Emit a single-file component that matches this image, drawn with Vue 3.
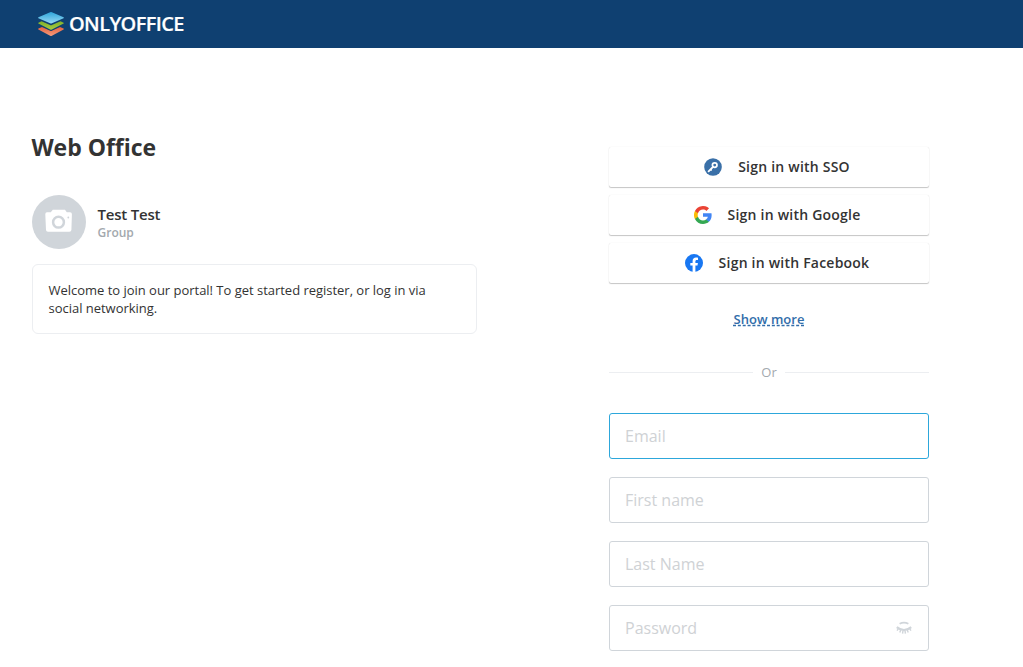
<script setup>
const providers = [
  { id: 'sso', label: 'Sign in with SSO' },
  { id: 'google', label: 'Sign in with Google' },
  { id: 'facebook', label: 'Sign in with Facebook' },
]
const fields = [
  { id: 'email', label: 'Email', type: 'text' },
  { id: 'first', label: 'First name', type: 'text' },
  { id: 'last', label: 'Last Name', type: 'text' },
  { id: 'password', label: 'Password', type: 'password' },
]
</script>

<template>
  <div class="page">
    <header class="bar">
      <svg class="logo" width="150" height="28" viewBox="0 0 150 28">
        <defs>
          <linearGradient id="lgBlue" x1="0" y1="0" x2="0" y2="1"><stop offset="0" stop-color="#2fa5da" /><stop offset="1" stop-color="#98daf4" /></linearGradient>
          <linearGradient id="lgGreen" x1="0" y1="0" x2="0" y2="1"><stop offset="0" stop-color="#7fb02c" /><stop offset="1" stop-color="#a8cc3e" /></linearGradient>
          <linearGradient id="lgRed" x1="0" y1="0" x2="0" y2="1"><stop offset="0" stop-color="#e5623f" /><stop offset="1" stop-color="#f49b7c" /></linearGradient>
        </defs>
        <path d="M1.400 18.600 5 17l8.100 3.700q.9.400 1.800 0L23 17l3.600 1.600q.6.400 0 .9L14.900 25.700q-.9.400-1.800 0L1.400 19.500q-.6-.5 0-.9z" fill="url(#lgRed)" />
        <path d="M1.400 12.700 4.500 11.200l8.600 3.900q.9.400 1.800 0l8.600-3.900 3.100 1.500q.6.400 0 .9L14.900 19.600q-.9.400-1.800 0L1.400 13.600q-.6-.5 0-.9z" fill="url(#lgGreen)" />
        <path d="M1.400 7.300 13.100 2.300q.9-.4 1.800 0L26.600 7.300q.6.400 0 .9L14.900 13.300q-.9.400-1.800 0L1.400 8.200q-.6-.5 0-.9z" fill="url(#lgBlue)" />
        <text x="32" y="21.300" textLength="115.500" lengthAdjust="spacing">ONLYOFFICE</text>
      </svg>
    </header>

    <main class="content">
      <section class="intro">
        <h1>Web Office</h1>
        <div class="user">
          <svg class="avatar" width="54" height="54" viewBox="0 0 54 54">
            <circle cx="27" cy="27" r="27" fill="#d0d5da" />
            <path d="M15 17.200H18.800L20.800 14.800H33L34.800 17.200H38q2 0 1.900 2L39.400 35q-.1 1.800-2 1.800H16q-1.900 0-2-1.800L13.300 19.200q0-2 1.700-2z" fill="#fff" />
            <circle cx="26.500" cy="27.200" r="5.400" fill="#fff" stroke="#d0d5da" stroke-width="2.500" />
            <circle cx="36.300" cy="22.500" r=".9" fill="#d0d5da" />
          </svg>
          <div class="who">
            <div class="name">Test Test</div>
            <div class="group">Group</div>
          </div>
        </div>
        <p class="welcome">Welcome to join our portal! To get started register, or log in via social networking.</p>
      </section>

      <section class="signup">
        <div class="providers">
          <button v-for="p in providers" :key="p.id" class="provider" type="button">
            <svg v-if="p.id === 'sso'" width="18" height="18" viewBox="0 0 18 18">
              <circle cx="9" cy="9" r="8.800" fill="#3a70a8" />
              <circle cx="10.700" cy="7.100" r="2.300" fill="none" stroke="#fff" stroke-width="1.700" />
              <path d="M9 8.900 4.600 13.300M6.600 11.400l.5.500" fill="none" stroke="#fff" stroke-width="1.900" stroke-linecap="round" />
            </svg>
            <svg v-else-if="p.id === 'google'" width="18" height="18" viewBox="0 0 18 18">
              <path fill="#4285f4" d="M17.640 9.200c0-.637-.057-1.251-.164-1.840H9v3.481h4.844a4.140 4.140 0 0 1-1.796 2.716v2.259h2.908c1.702-1.567 2.684-3.875 2.684-6.616z" />
              <path fill="#34a853" d="M9 18c2.430 0 4.467-.806 5.956-2.184l-2.908-2.259c-.806.540-1.837.860-3.048.860-2.344 0-4.328-1.584-5.036-3.711H.957v2.332A9 9 0 0 0 9 18z" />
              <path fill="#fbbc05" d="M3.964 10.706a5.410 5.410 0 0 1 0-3.412V4.962H.957a9 9 0 0 0 0 8.076z" />
              <path fill="#ea4335" d="M9 3.580c1.321 0 2.508.454 3.440 1.345l2.582-2.580A9 9 0 0 0 .957 4.962l3.007 2.332C4.672 5.163 6.656 3.580 9 3.580z" />
            </svg>
            <svg v-else width="18" height="18" viewBox="0 0 18 18">
              <circle cx="9" cy="9" r="9" fill="#1877f2" />
              <path d="M12.500 11.600 12.900 9h-2.500V7.310c0-.71.350-1.400 1.460-1.400H13V3.690s-1.030-.170-2.010-.170c-2.050 0-3.390 1.240-3.390 3.490V9H5.310v2.600H7.600v6.290q1.400.22 2.800 0V11.600z" fill="#fff" />
            </svg>
            <span>{{ p.label }}</span>
          </button>
        </div>
        <div class="more"><a>Show more</a></div>
        <div class="divider"><span>Or</span></div>
        <form class="form">
          <div v-for="(f, i) in fields" :key="f.id" class="field" :class="{ focused: i === 0 }">
            <input :type="f.type" :placeholder="f.label" />
            <svg v-if="f.id === 'password'" width="16" height="16" viewBox="0 0 16 16" fill="none" stroke="#d0d5da">
              <path d="M3.600 3.800Q8 1.400 12.400 3.800" stroke-width="1.700" />
              <path d="M.8 7.200Q8 13.200 15.200 7.200" stroke-width="2.200" />
              <path d="M2.300 8.800 1 10.600M4.700 10 3.800 12.500M6.900 11 6.600 13.700M9.100 11l.3 2.700M11.300 10l.9 2.500M13.700 8.800l1.300 1.800" stroke-width="1.400" />
            </svg>
          </div>
        </form>
      </section>
    </main>
  </div>
</template>

<style>
body {
  margin: 0;
  background: #fff;
  overflow: hidden;
}
</style>

<style scoped>
.page {
  height: 667px;
  overflow: hidden;
  font-family: "Open Sans", "Noto Sans", sans-serif;
  font-size: 13px;
  color: #333;
}
.bar {
  height: 48px;
  box-sizing: border-box;
  padding: 10px 0 0 37px;
  background: #0f4071;
}
.logo {
  display: block;
}
.logo text {
  font: 600 20px "Open Sans", sans-serif;
  fill: #fff;
  stroke: #fff;
  stroke-width: 0.2px;
}
.content {
  display: flex;
  justify-content: space-between;
  padding: 0 94px 0 32px;
}
.intro {
  width: 445px;
  padding-top: 83px;
}
h1 {
  margin: 0 0 0 -0.6px;
  font-size: 23px;
  line-height: 32px;
  font-weight: 700;
  letter-spacing: -0.03px;
}
.user {
  display: flex;
  align-items: center;
  gap: 11.5px;
  margin-top: 32px;
}
.who {
  padding-top: 1px;
}
.name {
  font-size: 15px;
  line-height: 20px;
  font-weight: 600;
  letter-spacing: -0.2px;
}
.group {
  font-size: 12px;
  line-height: 17px;
  font-weight: 600;
  color: #a3a9ae;
}
.welcome {
  box-sizing: border-box;
  height: 70px;
  margin: 15px 0 0;
  padding: 16px 15.5px;
  border: 1px solid #eceef1;
  border-radius: 6px;
  line-height: 18px;
  letter-spacing: -0.02px;
}
.signup {
  width: 320px;
  padding-top: 99px;
}
.providers {
  display: grid;
  gap: 8px;
}
.provider {
  display: flex;
  align-items: center;
  justify-content: center;
  gap: 16px;
  height: 40px;
  padding: 0 0 0 16px;
  border: 0;
  border-radius: 2px;
  background: #fff;
  box-shadow: 0 1px 1px rgba(0, 0, 0, 0.22), 0 0 1px rgba(0, 0, 0, 0.14);
  font: 600 14px "Open Sans", sans-serif;
  letter-spacing: 0.22px;
  color: #333;
}
.provider span {
  padding-bottom: 2px;
}
.more {
  margin-top: 26px;
  text-align: center;
  line-height: 20px;
  font-weight: 600;
}
.more a {
  color: #316daa;
  text-decoration: underline dashed;
}
.divider {
  display: flex;
  align-items: center;
  gap: 8px;
  height: 20px;
  margin-top: 33px;
  color: #a3a9ae;
}
.divider::before,
.divider::after {
  content: "";
  flex: 1;
  height: 1px;
  background: #eceef1;
}
.form {
  display: grid;
  gap: 18px;
  margin-top: 31px;
}
.field {
  display: flex;
  align-items: center;
  box-sizing: border-box;
  height: 46px;
  padding: 0 16.5px 0 15px;
  border: 1px solid #d0d5da;
  border-radius: 3px;
}
.field.focused {
  border-color: #2da7db;
}
.field input {
  flex: 1;
  min-width: 0;
  padding: 0;
  border: 0;
  outline: 0;
  background: none;
  font: 16px "Open Sans", sans-serif;
}
.field input::placeholder {
  color: #cfd2d5;
  opacity: 1;
}
</style>
